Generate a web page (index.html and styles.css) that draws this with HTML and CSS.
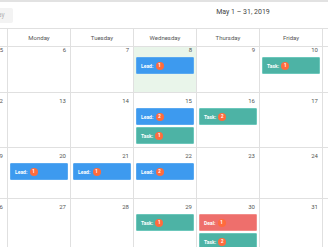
FILE: index.html
```html
<!DOCTYPE html>
<html lang="en">
<head>
    <meta charset="UTF-8">
    <title>Calendar</title>
    <link rel="stylesheet" href="styles.css">
</head>
<body>
    <div class="topbar"></div>
    <div class="toolbar">
        <div class="toolbar-left"><button class="btn" disabled>Today</button></div>
        <h2 class="title">May 1 – 31, 2019</h2>
    </div>

    <div class="calendar">
        <div class="head">
            <div>Sunday</div><div>Monday</div><div>Tuesday</div><div>Wednesday</div><div>Thursday</div><div>Friday</div><div>Saturday</div>
        </div>

        <div class="week week-first">
            <div class="day"><div class="num">5</div></div>
            <div class="day"><div class="num">6</div></div>
            <div class="day"><div class="num">7</div></div>
            <div class="day today"><div class="num">8</div>
                <div class="event lead">Lead: <span class="badge">1</span></div>
            </div>
            <div class="day"><div class="num">9</div></div>
            <div class="day"><div class="num">10</div>
                <div class="event task">Task: <span class="badge">1</span></div>
            </div>
            <div class="day"><div class="num">11</div></div>
        </div>

        <div class="week">
            <div class="day"><div class="num">12</div></div>
            <div class="day"><div class="num">13</div></div>
            <div class="day"><div class="num">14</div></div>
            <div class="day"><div class="num">15</div>
                <div class="event lead">Lead: <span class="badge">2</span></div>
                <div class="event task">Task: <span class="badge">1</span></div>
            </div>
            <div class="day"><div class="num">16</div>
                <div class="event task">Task: <span class="badge">2</span></div>
            </div>
            <div class="day"><div class="num">17</div></div>
            <div class="day"><div class="num">18</div></div>
        </div>

        <div class="week">
            <div class="day"><div class="num">19</div></div>
            <div class="day"><div class="num">20</div>
                <div class="event lead">Lead: <span class="badge">1</span></div>
            </div>
            <div class="day"><div class="num">21</div>
                <div class="event lead">Lead: <span class="badge">1</span></div>
            </div>
            <div class="day"><div class="num">22</div>
                <div class="event lead">Lead: <span class="badge">2</span></div>
            </div>
            <div class="day"><div class="num">23</div></div>
            <div class="day"><div class="num">24</div></div>
            <div class="day"><div class="num">25</div></div>
        </div>

        <div class="week">
            <div class="day"><div class="num">26</div></div>
            <div class="day"><div class="num">27</div></div>
            <div class="day"><div class="num">28</div></div>
            <div class="day"><div class="num">29</div>
                <div class="event task">Task: <span class="badge">1</span></div>
            </div>
            <div class="day"><div class="num">30</div>
                <div class="event deal">Deal: <span class="badge">1</span></div>
                <div class="event task">Task: <span class="badge">2</span></div>
            </div>
            <div class="day"><div class="num">31</div></div>
            <div class="day other"><div class="num">1</div></div>
        </div>
    </div>
</body>
</html>
```

FILE: styles.css
```css
body { margin: 0; font-family: Roboto, "Liberation Sans", sans-serif; background: #fff; overflow: hidden; }
.topbar { height: 2px; background: #e2e2e2; }
.toolbar { display: flex; align-items: flex-start; height: 26px; }
.toolbar-left { width: 158px; }
.btn { margin: 3px 0 0 -21px; height: 15px; padding: 0 8px; border: none; border-radius: 2px; background: #f3f3f3; color: #b3b3b3; font-family: Roboto, "Liberation Sans", sans-serif; font-size: 6.5px; }
.title { flex: 1; margin: 3px 0 0; text-align: center; font-size: 7px; line-height: 15px; font-weight: 400; color: #444; }

.calendar { margin-left: -56px; width: 442px; border-top: 1px solid #e0e0e0; }
.head, .week { display: grid; grid-template-columns: repeat(7, 63px); border-bottom: 1px solid #e0e0e0; }
.head div { border-left: 1px solid #e0e0e0; height: 17px; line-height: 17px; text-align: center; font-size: 6px; color: #555; }

.day { box-sizing: border-box; min-height: 50px; padding: 2px 2px 1px; border-left: 1px solid #e0e0e0; }
.week-first .day { min-height: 45px; }
.week-first .num { margin-top: -5px; }
.today { background: #e9f5ea; }
.num { text-align: right; padding-right: 2px; margin-bottom: 2px; font-size: 6px; line-height: 11px; color: #555; }
.other .num { color: #aaa; }

.event { display: flex; align-items: center; box-sizing: border-box; height: 17px; padding: 0 4px; margin-bottom: 2px; border-radius: 1px; color: #fff; font-size: 5px; font-weight: 700; white-space: pre; }
.lead { background: #3d9aef; border: 1px solid #5aa9f0; }
.task { background: #4db3a5; border: 1px solid #6cc7bb; }
.deal { background: #ee6f6c; border: 1px solid #f28e8b; }
.badge { width: 8px; height: 8px; margin-left: 1px; border-radius: 50%; background: #ff6b3d; font-size: 4.5px; line-height: 8px; text-align: center; }
```
